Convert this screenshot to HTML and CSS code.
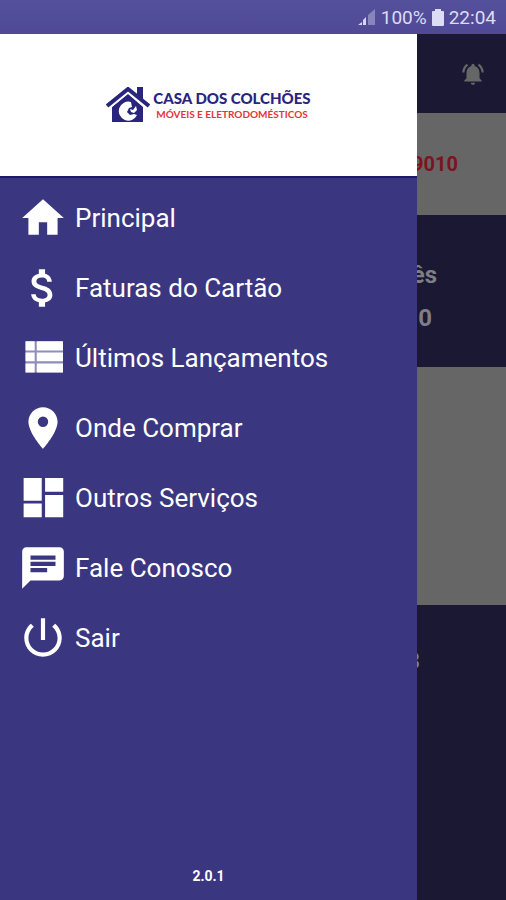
FILE: index.html
```html
<!DOCTYPE html>
<html lang="pt-BR">
<head>
<meta charset="utf-8">
<meta name="viewport" content="width=device-width, initial-scale=1">
<title>Casa dos Colchões</title>
<link rel="stylesheet" href="styles.css">
</head>
<body>
<div class="status-bar">
  <svg class="signal" viewBox="0 0 18 18" aria-hidden="true">
    <path d="M0 17 4 14V17ZM5 17V12L8 9V17Z" fill="#d6d6f2"/>
    <path d="M10 17V7L17 1V17Z" fill="#8885bd"/>
  </svg>
  <span>100%</span>
  <svg class="battery" viewBox="0 0 12 17" aria-hidden="true"><path d="M3 0h6v2h2q1 0 1 1v13q0 1-1 1H1q-1 0-1-1V3q0-1 1-1h2Z"/></svg>
  <span>22:04</span>
</div>
<div class="stage">
  <main class="page">
    <header class="toolbar">
      <svg class="bell" viewBox="0 0 24 24" role="img" aria-label="Notificações"><path d="M7.58 4.08 6.15 2.65C3.75 4.48 2.17 7.3 2.03 10.5h2c.15-2.65 1.51-4.97 3.55-6.42zM19.97 10.5h2c-.15-3.2-1.73-6.02-4.12-7.85l-1.42 1.43c2.02 1.45 3.39 3.77 3.54 6.42zM18 11c0-3.07-1.64-5.64-4.5-6.32V4c0-.83-.67-1.5-1.5-1.5s-1.5.67-1.5 1.5v.68C7.63 5.36 6 7.92 6 11v5l-2 2v1h16v-1l-2-2zM12 22c1.1 0 2-.9 2-2h-4c0 1.1.9 2 2 2z"/></svg>
    </header>
    <section class="card-number"><span>9010</span></section>
    <section class="summary">
      <span class="summary-label">ês</span>
      <span class="summary-value">0</span>
    </section>
    <section class="blank"></section>
    <section class="details"><span>3</span></section>
  </main>
  <aside class="drawer">
    <div class="brand">
      <svg class="brand-mark" viewBox="0 0 44 36" aria-hidden="true">
        <path fill="#29257e" d="M31 0h6v13l-6-5ZM6 20 22 7l15 13v15H6Z"/>
        <path fill="none" stroke="#fff" stroke-width="1" d="M3 22 22 6 41 22"/>
        <path fill="none" stroke="#29257e" stroke-width="4" d="M1 19 22 2 43 19"/>
        <path fill="#fff" d="M25 15a9.500 9.500 0 1 0 6 13l-3-1-4 1-3-3 2-4 3-1Z"/>
        <path fill="#fff" d="m24 22 3 1 3-4 1 4-3 3-3-1Z"/>
      </svg>
      <div class="brand-text">
        <strong>CASA DOS COLCHÕES</strong>
        <span>MÓVEIS E ELETRODOMÉSTICOS</span>
      </div>
    </div>
    <nav class="menu">
      <a href="#principal"><svg viewBox="0 0 24 24"><path d="M10 20v-6h4v6h5v-8h3L12 3 2 12h3v8z"/></svg>Principal</a>
      <a href="#faturas"><svg viewBox="0 0 24 24"><path d="M11.8 10.9c-2.27-.59-3-1.2-3-2.15 0-1.09 1.01-1.85 2.7-1.85 1.78 0 2.44.85 2.5 2.1h2.21c-.07-1.72-1.12-3.3-3.21-3.81V3h-3v2.16c-1.94.42-3.5 1.68-3.5 3.61 0 2.31 1.91 3.46 4.7 4.13 2.5.6 3 1.48 3 2.41 0 .69-.49 1.79-2.7 1.79-2.06 0-2.87-.92-2.98-2.1h-2.2c.12 2.19 1.76 3.42 3.68 3.83V21h3v-2.15c1.95-.37 3.5-1.5 3.5-3.55 0-2.84-2.43-3.81-4.7-4.4z"/></svg>Faturas do Cartão</a>
      <a href="#lancamentos"><svg viewBox="0 0 24 24"><path fill="#8f8dba" d="M3.600 4h18v15H3.600z"/><path d="M3.600 4h4.400v4.400H3.600zM9 4h12.600v4.400H9zM3.600 9.400h4.400v4.200H3.600zM9 9.400h12.600v4.200H9zM3.600 14.600h4.400V19H3.600zM9 14.600h12.600V19H9z"/></svg>Últimos Lançamentos</a>
      <a href="#onde-comprar"><svg viewBox="0 0 24 24"><path d="M12 2C8.13 2 5 5.13 5 9c0 5.25 7 13 7 13s7-7.75 7-13c0-3.87-3.13-7-7-7zm0 9.500a2.500 2.500 0 0 1 0-5 2.500 2.500 0 0 1 0 5z"/></svg>Onde Comprar</a>
      <a href="#servicos"><svg viewBox="0 0 24 24"><path d="M2.700 13.300h8.700V2.400H2.700zM2.700 21.300h8.700v-6.700H2.700zM13 21.300h8.700V10.500H13zM13 2.400v6.600h8.700V2.400z"/></svg>Outros Serviços</a>
      <a href="#contato"><svg viewBox="0 0 24 24"><path d="M20 2H4c-1.1 0-1.99.9-1.99 2L2 22l4-4h14c1.1 0 2-.9 2-2V4c0-1.1-.9-2-2-2zM6 9h12v2H6zm8 5H6v-2h8zm4-6H6V6h12z"/></svg>Fale Conosco</a>
      <a href="#sair"><svg viewBox="0 0 24 24"><path d="M13 2.500h-2v10.500h2zm4.830 2.670-1.420 1.420C17.990 7.860 19 9.810 19 12c0 3.870-3.130 7-7 7s-7-3.130-7-7c0-2.190 1.010-4.140 2.580-5.420L6.170 5.170C4.230 6.820 3 9.260 3 12c0 4.970 4.030 9 9 9s9-4.030 9-9c0-2.740-1.230-5.180-3.170-6.830z"/></svg>Sair</a>
    </nav>
    <footer class="version">2.0.1</footer>
  </aside>
</div>
</body>
</html>
```
FILE: styles.css
```css
* {
  box-sizing: border-box;
}

body {
  display: flex;
  flex-direction: column;
  min-height: 100vh;
  margin: 0;
  font-family: Roboto, "Liberation Sans", sans-serif;
  background: #1a1833;
}

.status-bar {
  display: flex;
  align-items: center;
  justify-content: flex-end;
  gap: 5px;
  height: 34px;
  padding: 0 10px;
  color: #dcdcf6;
  font-size: 19px;
  background: linear-gradient(#55509b, #504a96);
}

.signal {
  width: 18px;
  height: 18px;
}

.battery {
  width: 12px;
  height: 17px;
  fill: #dcdcf6;
}

/* The drawer shares the page's grid cell and lies over it. */
.stage {
  display: grid;
  flex: 1;
}

.page,
.drawer {
  grid-area: 1 / 1;
  display: flex;
  flex-direction: column;
}

.page {
  color: #7e7e86;
  font-weight: 700;
  text-align: right;
  background: #1a1833;
}

.toolbar {
  display: flex;
  align-items: center;
  justify-content: flex-end;
  height: 79px;
  padding: 0 20px;
}

.bell {
  width: 26px;
  height: 26px;
  fill: #666;
}

.card-number {
  height: 102px;
  padding-right: 48px;
  color: #7c1420;
  font-size: 20px;
  line-height: 102px;
  background: #666;
}

.summary {
  display: flex;
  flex-direction: column;
  height: 152px;
  padding-top: 39px;
  font-size: 24px;
  line-height: 43px;
}

.summary-label {
  padding-right: 69px;
}

.summary-value {
  padding-right: 74px;
}

.blank {
  height: 238px;
  background: #666;
}

.details {
  padding: 38px 86px 0 0;
  font-size: 24px;
  line-height: 36px;
}

.drawer {
  width: calc(100% - 89px);
  color: #fff;
  background: #3b3680;
}

.brand {
  display: flex;
  align-items: center;
  justify-content: center;
  gap: 3px;
  height: 144px;
  border-bottom: 2px solid #1d1a6c;
  background: #fff;
}

.brand-mark {
  width: 44px;
  height: 36px;
}

.brand-text {
  display: flex;
  flex-direction: column;
  align-items: center;
  font-family: Lato, sans-serif;
  white-space: nowrap;
}

.brand-text strong {
  color: #29257e;
  font-size: 15px;
  font-weight: 900;
  line-height: 17px;
}

.brand-text span {
  color: #e2343c;
  font-size: 10px;
  font-weight: 700;
  line-height: 14px;
}

.menu {
  display: flex;
  flex-direction: column;
  padding-top: 5px;
}

.menu a {
  display: flex;
  align-items: center;
  gap: 7px;
  height: 70px;
  padding-left: 18px;
  color: #fff;
  font-size: 26px;
  text-decoration: none;
}

.menu svg {
  width: 50px;
  height: 50px;
  fill: #fff;
}

.version {
  margin-top: auto;
  padding-bottom: 16px;
  font-size: 14px;
  font-weight: 700;
  line-height: 16px;
  text-align: center;
}
```
